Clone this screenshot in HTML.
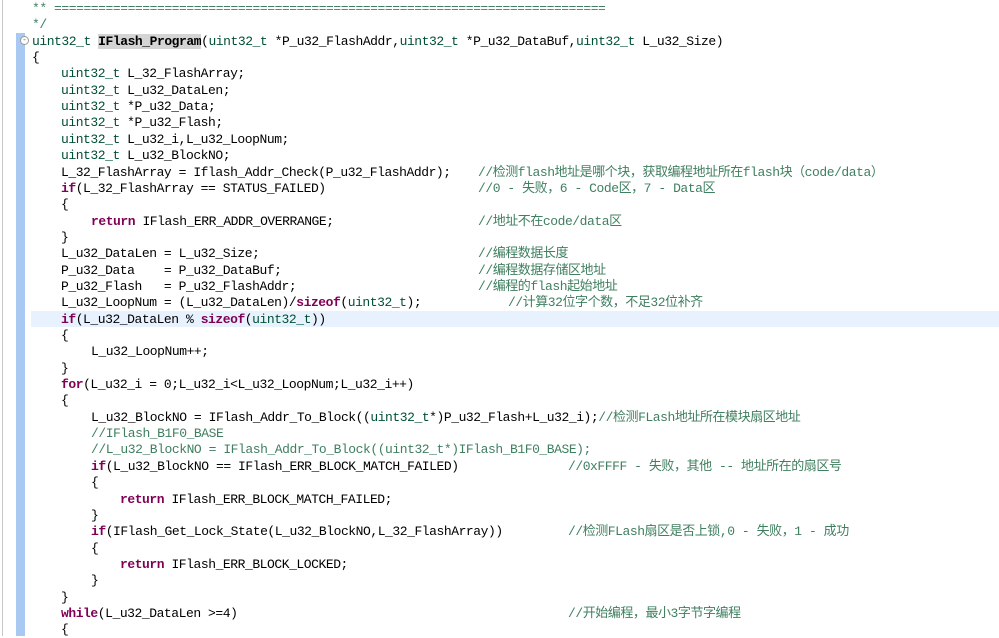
<!DOCTYPE html>
<html><head><meta charset="utf-8"><style>
body{margin:0;width:999px;height:636px;overflow:hidden;background:#fff;position:relative;font-family:"Liberation Mono","Noto Sans CJK SC",monospace;font-size:13px;letter-spacing:-0.45px;}
.gl{position:absolute;left:2px;top:0;width:1px;height:636px;background:#c8c8c8}
.bar{position:absolute;left:16px;top:33px;width:9px;height:603px;background:#a9c9f2}
.hl{position:absolute;left:31px;top:311px;width:968px;height:16px;background:#e8f2fe}
.l{position:absolute;white-space:pre;height:16px;line-height:16px;color:#000;margin-top:1px}
.t{color:#005032}.k{color:#7f0055;font-weight:bold}.c{color:#3f7f5f}
.fn{font-weight:bold;background:#d4d4d4}
.fold{position:absolute;left:20px;top:36px;width:7px;height:7px;border:1px solid #999;border-radius:50%;font-size:8px;line-height:7px;text-align:center;color:#666;background:#fff;letter-spacing:0}
</style></head><body>
<div class="gl"></div><div class="bar"></div><div class="hl"></div>
<div class="fold">-</div>
<div class="l c" style="left:32px;top:0px">** ===========================================================================</div>
<div class="l c" style="left:32px;top:16.35px">*/</div>
<div class="l" style="left:32px;top:32.7px"><span class="t">uint32_t</span> <span class="fn">IFlash_Program</span>(<span class="t">uint32_t</span> *P_u32_FlashAddr,<span class="t">uint32_t</span> *P_u32_DataBuf,<span class="t">uint32_t</span> L_u32_Size)</div>
<div class="l" style="left:32px;top:49.05px">{</div>
<div class="l" style="left:61px;top:65.4px"><span class="t">uint32_t</span> L_32_FlashArray;</div>
<div class="l" style="left:61px;top:81.75px"><span class="t">uint32_t</span> L_u32_DataLen;</div>
<div class="l" style="left:61px;top:98.1px"><span class="t">uint32_t</span> *P_u32_Data;</div>
<div class="l" style="left:61px;top:114.45px"><span class="t">uint32_t</span> *P_u32_Flash;</div>
<div class="l" style="left:61px;top:130.8px"><span class="t">uint32_t</span> L_u32_i,L_u32_LoopNum;</div>
<div class="l" style="left:61px;top:147.15px"><span class="t">uint32_t</span> L_u32_BlockNO;</div>
<div class="l" style="left:61px;top:163.5px">L_32_FlashArray = Iflash_Addr_Check(P_u32_FlashAddr);</div>
<div class="l c" style="left:478px;top:163.5px">//检测flash地址是哪个块，获取编程地址所在flash块（code/data）</div>
<div class="l" style="left:61px;top:179.85px"><span class="k">if</span>(L_32_FlashArray == STATUS_FAILED)</div>
<div class="l c" style="left:478px;top:179.85px">//0 - 失败，6 - Code区，7 - Data区</div>
<div class="l" style="left:61px;top:196.2px">{</div>
<div class="l" style="left:91px;top:212.55px"><span class="k">return</span> IFlash_ERR_ADDR_OVERRANGE;</div>
<div class="l c" style="left:478px;top:212.55px">//地址不在code/data区</div>
<div class="l" style="left:61px;top:228.9px">}</div>
<div class="l" style="left:61px;top:245.25px">L_u32_DataLen = L_u32_Size;</div>
<div class="l c" style="left:478px;top:245.25px">//编程数据长度</div>
<div class="l" style="left:61px;top:261.6px">P_u32_Data    = P_u32_DataBuf;</div>
<div class="l c" style="left:478px;top:261.6px">//编程数据存储区地址</div>
<div class="l" style="left:61px;top:277.95px">P_u32_Flash   = P_u32_FlashAddr;</div>
<div class="l c" style="left:478px;top:277.95px">//编程的flash起始地址</div>
<div class="l" style="left:61px;top:294.3px">L_u32_LoopNum = (L_u32_DataLen)/<span class="k">sizeof</span>(<span class="t">uint32_t</span>);</div>
<div class="l c" style="left:508px;top:294.3px">//计算32位字个数，不足32位补齐</div>
<div class="l" style="left:61px;top:310.65px"><span class="k">if</span>(L_u32_DataLen % <span class="k">sizeof</span>(<span class="t">uint32_t</span>))</div>
<div class="l" style="left:61px;top:327px">{</div>
<div class="l" style="left:91px;top:343.35px">L_u32_LoopNum++;</div>
<div class="l" style="left:61px;top:359.7px">}</div>
<div class="l" style="left:61px;top:376.05px"><span class="k">for</span>(L_u32_i = 0;L_u32_i&lt;L_u32_LoopNum;L_u32_i++)</div>
<div class="l" style="left:61px;top:392.4px">{</div>
<div class="l" style="left:91px;top:408.75px">L_u32_BlockNO = IFlash_Addr_To_Block((<span class="t">uint32_t</span>*)P_u32_Flash+L_u32_i);<span class="c">//检测FLash地址所在模块扇区地址</span></div>
<div class="l c" style="left:91px;top:425.1px">//IFlash_B1F0_BASE</div>
<div class="l c" style="left:91px;top:441.45px">//L_u32_BlockNO = IFlash_Addr_To_Block((uint32_t*)IFlash_B1F0_BASE);</div>
<div class="l" style="left:91px;top:457.8px"><span class="k">if</span>(L_u32_BlockNO == IFlash_ERR_BLOCK_MATCH_FAILED)</div>
<div class="l c" style="left:568px;top:457.8px">//0xFFFF - 失败，其他 -- 地址所在的扇区号</div>
<div class="l" style="left:91px;top:474.15px">{</div>
<div class="l" style="left:120px;top:490.5px"><span class="k">return</span> IFlash_ERR_BLOCK_MATCH_FAILED;</div>
<div class="l" style="left:91px;top:506.85px">}</div>
<div class="l" style="left:91px;top:523.2px"><span class="k">if</span>(IFlash_Get_Lock_State(L_u32_BlockNO,L_32_FlashArray))</div>
<div class="l c" style="left:568px;top:523.2px">//检测FLash扇区是否上锁,0 - 失败，1 - 成功</div>
<div class="l" style="left:91px;top:539.55px">{</div>
<div class="l" style="left:120px;top:555.9px"><span class="k">return</span> IFlash_ERR_BLOCK_LOCKED;</div>
<div class="l" style="left:91px;top:572.25px">}</div>
<div class="l" style="left:61px;top:588.6px">}</div>
<div class="l" style="left:61px;top:604.95px"><span class="k">while</span>(L_u32_DataLen &gt;=4)</div>
<div class="l c" style="left:568px;top:604.95px">//开始编程，最小3字节字编程</div>
<div class="l" style="left:61px;top:621.3px">{</div>
</body></html>
